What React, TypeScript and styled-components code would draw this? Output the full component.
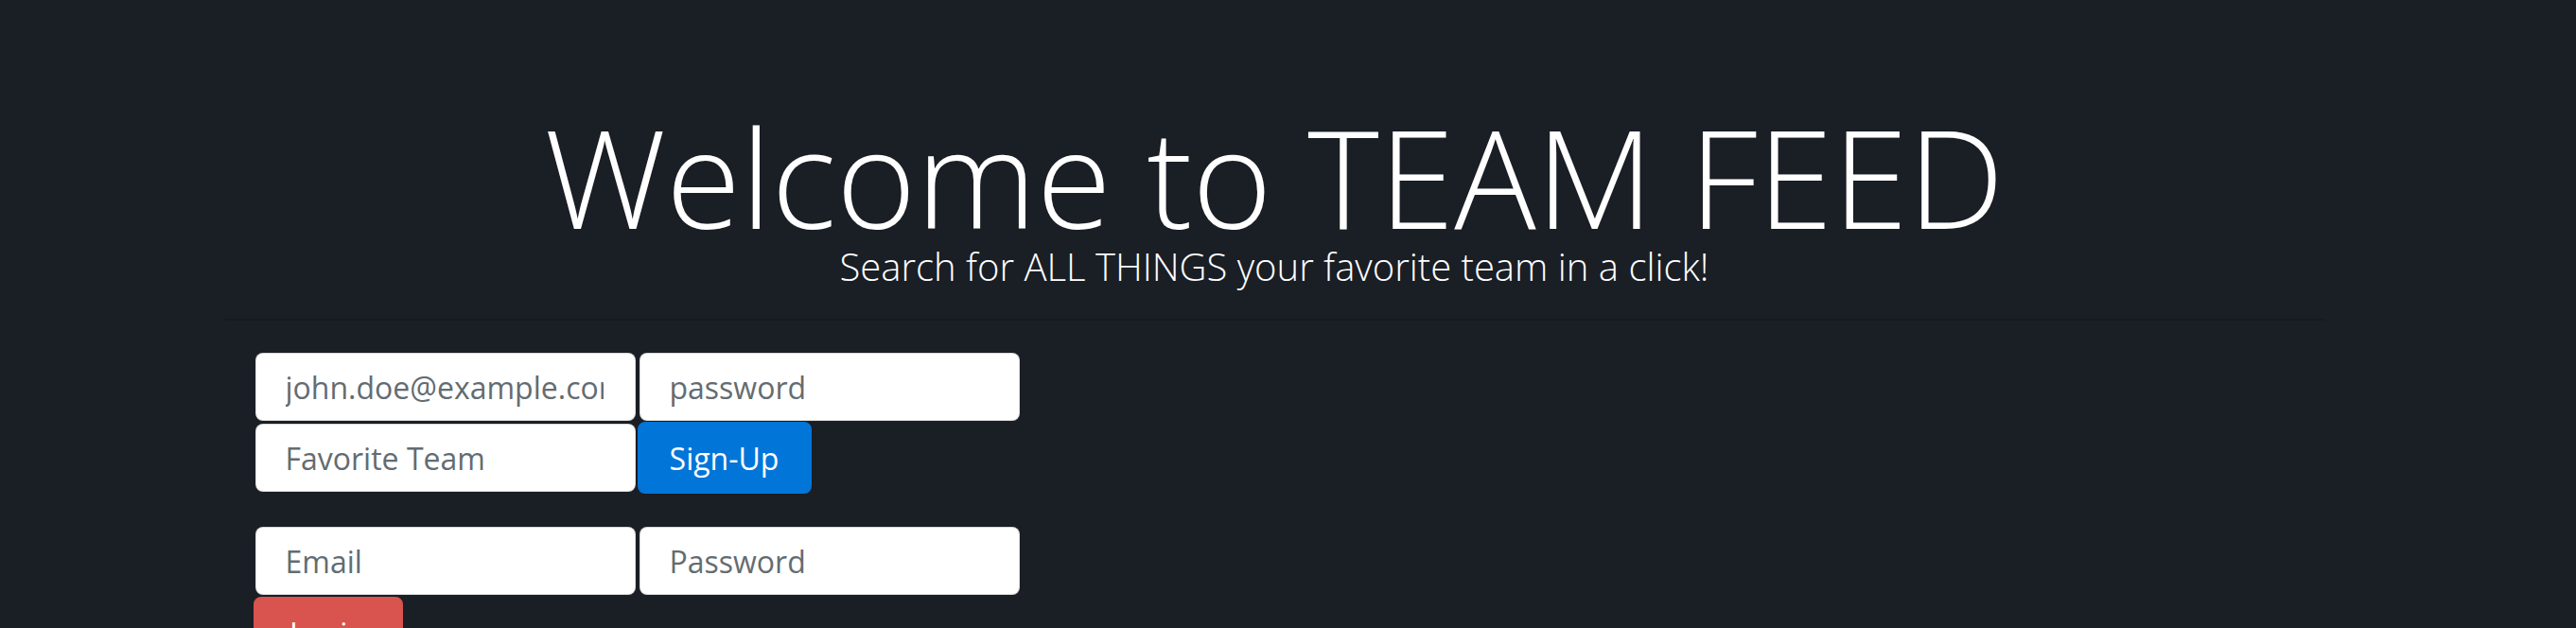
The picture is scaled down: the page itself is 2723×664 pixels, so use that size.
import React from "react";
import styled, { createGlobalStyle } from "styled-components";

const GlobalStyle = createGlobalStyle`
  html, body {
    margin: 0;
    padding: 0;
    background: #1a1e25;
  }
  body {
    font-family: "Open Sans", "Noto Sans", sans-serif;
    color: #ffffff;
  }
  * { box-sizing: border-box; }
`;

const Page = styled.div`
  min-height: 664px;
  background: #1a1e25;
  padding: 116px 29px 0 0;
`;

const Container = styled.div`
  width: 2221px;
  margin: 0 auto;
`;

const Hero = styled.header`
  display: flex;
  flex-direction: column;
  align-items: center;
  text-align: center;
`;

const Title = styled.h1`
  margin: 0;
  font-family: "Open Sans", sans-serif;
  font-weight: 300;
  font-size: 144px;
  line-height: 140px;
  color: #ffffff;
`;

const Lead = styled.p`
  margin: 2px 0 0;
  font-family: "Open Sans", sans-serif;
  font-weight: 300;
  font-size: 40px;
  line-height: 48px;
  color: #ffffff;
`;

const Divider = styled.hr`
  margin: 31px 0 0;
  border: 0;
  border-top: 2px solid rgba(0, 0, 0, 0.12);
`;

const FormArea = styled.div`
  display: flex;
  flex-direction: column;
  padding-left: 31px;
`;

const Form = styled.form<{ $top: number }>`
  display: flex;
  flex-direction: column;
  margin-top: ${(p) => p.$top}px;
`;

const Row = styled.div<{ $top?: number }>`
  display: flex;
  align-items: center;
  margin-top: ${(p) => p.$top ?? 0}px;
`;

const Input = styled.input`
  width: 402px;
  height: 72px;
  margin: 0 2px;
  padding: 0 33px 0 31px;
  border: 1px solid rgba(0, 0, 0, 0.15);
  border-radius: 8px;
  background: #ffffff;
  font-family: "Open Sans", sans-serif;
  font-size: 32px;
  color: #464a4c;
  outline: none;
  &::placeholder {
    color: #636c72;
    opacity: 1;
  }
`;

const Button = styled.button<{ $variant: "primary" | "danger"; $width: number }>`
  width: ${(p) => p.$width}px;
  height: 76px;
  padding: 0;
  border: 2px solid ${(p) => (p.$variant === "primary" ? "#0275d8" : "#d9534f")};
  border-radius: 8px;
  background: ${(p) => (p.$variant === "primary" ? "#0275d8" : "#d9534f")};
  color: #ffffff;
  font-family: "Open Sans", sans-serif;
  font-size: 32px;
  font-weight: 400;
  cursor: pointer;
`;

export default function App() {
  return (
    <>
      <GlobalStyle />
      <Page>
        <Container>
          <Hero>
            <Title>Welcome to TEAM FEED</Title>
            <Lead>Search for ALL THINGS your favorite team in a click!</Lead>
          </Hero>
          <Divider />
          <FormArea>
            <Form $top={34} onSubmit={(e) => e.preventDefault()}>
              <Row>
                <Input type="email" placeholder="john.doe@example.com" />
                <Input type="password" placeholder="password" />
              </Row>
              <Row $top={1}>
                <Input type="text" placeholder="Favorite Team" />
                <Button type="submit" $variant="primary" $width={184}>
                  Sign-Up
                </Button>
              </Row>
            </Form>
            <Form $top={35} onSubmit={(e) => e.preventDefault()}>
              <Row>
                <Input type="email" placeholder="Email" />
                <Input type="password" placeholder="Password" />
              </Row>
              <Row $top={2}>
                <Button type="submit" $variant="danger" $width={158}>
                  Login
                </Button>
              </Row>
            </Form>
          </FormArea>
        </Container>
      </Page>
    </>
  );
}
